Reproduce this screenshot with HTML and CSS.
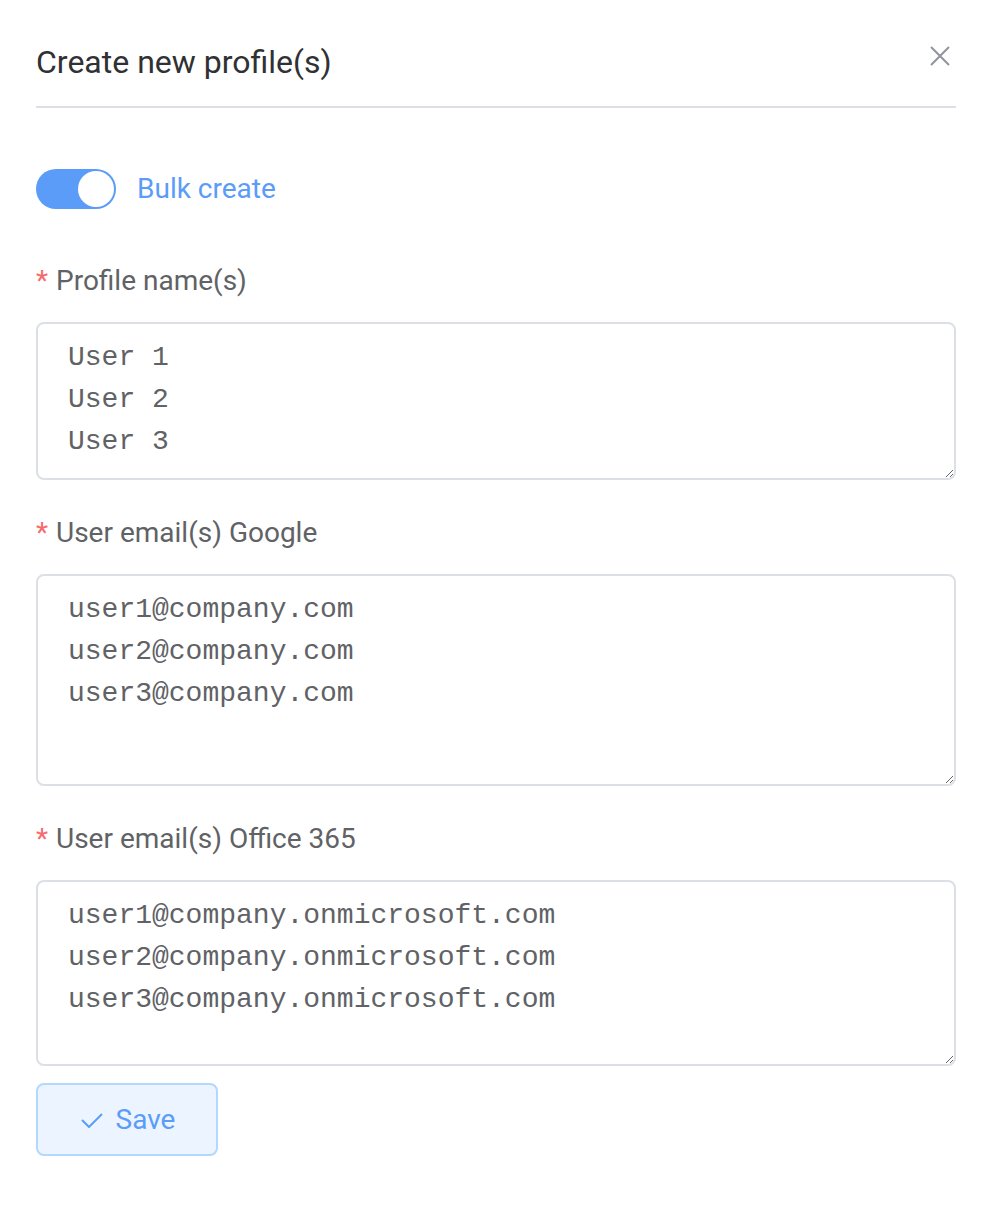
FILE: index.html
```html
<!DOCTYPE html>
<html>
<head>
<meta charset="utf-8">
<link rel="stylesheet" href="styles.css">
</head>
<body>
<div class="dialog">
  <div class="header">
    <h1 class="title">Create new profile(s)</h1>
    <button class="close" aria-label="Close">
      <svg width="20" height="20" viewBox="0 0 20 20"><path d="M1 1 L19 19 M19 1 L1 19" stroke="#909399" stroke-width="2" fill="none"/></svg>
    </button>
  </div>
  <div class="body">
    <div class="switch-row">
      <span class="switch"><span class="knob"></span></span>
      <span class="switch-label">Bulk create</span>
    </div>
    <div class="field first">
      <label class="label"><span class="req">*</span> Profile name(s)</label>
      <textarea class="ta ta1">User 1
User 2
User 3</textarea>
    </div>
    <div class="field">
      <label class="label"><span class="req">*</span> User email(s) Google</label>
      <textarea class="ta ta2">user1@company.com
user2@company.com
user3@company.com</textarea>
    </div>
    <div class="field">
      <label class="label"><span class="req">*</span> User email(s) Office 365</label>
      <textarea class="ta ta3">user1@company.onmicrosoft.com
user2@company.onmicrosoft.com
user3@company.onmicrosoft.com</textarea>
    </div>
    <button class="save">
      <svg width="22" height="16" viewBox="0 0 22 16"><path d="M1 8 L8 15 L21 2" stroke="#5a9cf8" stroke-width="2" fill="none"/></svg>
      <span>Save</span>
    </button>
  </div>
</div>
</body>
</html>
```

FILE: styles.css
```css
* { box-sizing: border-box; }
html, body { margin: 0; padding: 0; background: #fff; }
body { font-family: Roboto, "Liberation Sans", sans-serif; }
.dialog { padding: 0 38px 0 36px; }
.header {
  display: flex;
  justify-content: space-between;
  align-items: flex-start;
  padding-top: 42px;
  height: 108px;
  border-bottom: 2px solid #dcdfe6;
}
.title {
  margin: 0;
  font-size: 32px;
  line-height: 40px;
  font-weight: 400;
  color: #303133;
}
.close {
  border: 0;
  background: none;
  padding: 0;
  margin: 4px 6px 0 0;
  width: 20px;
  height: 20px;
  display: flex;
}
.body { padding-top: 61px; }
.switch-row { display: flex; align-items: center; height: 40px; gap: 21px; }
.switch {
  width: 80px; height: 40px; border-radius: 20px;
  background: #5a9cf8; display: flex; justify-content: flex-end; align-items: center;
  padding: 2px;
}
.knob { width: 36px; height: 36px; border-radius: 50%; background: #fff; }
.switch-label { font-size: 28px; color: #5a9cf8; line-height: 40px; }
.field { display: flex; flex-direction: column; margin-top: 33px; }
.field.first { margin-top: 52px; }
.label {
  font-size: 28px; line-height: 40px; color: #606266; margin-bottom: 21px;
}
.req { color: #f56c6c; margin-right: 1px; }
.ta {
  display: block;
  width: 100%;
  border: 2px solid #dcdfe6;
  border-radius: 8px;
  padding: 13px 30px 9px;
  font-family: "Liberation Mono", "Courier New", monospace;
  font-size: 28px;
  line-height: 42px;
  color: #606266;
  resize: vertical;
  outline: none;
  background: #fff;
}
.ta1 { height: 158px; }
.ta2 { height: 212px; }
.ta3 { height: 186px; }
.save {
  margin-top: 17px;
  width: 182px; height: 73px;
  border: 2px solid #b3d8ff;
  border-radius: 8px;
  background: #ecf5ff;
  color: #5a9cf8;
  font-family: Roboto, "Liberation Sans", sans-serif;
  font-size: 28px;
  display: flex; align-items: center; justify-content: center; gap: 13px;
  padding: 0 0 0 2px;
}
```
